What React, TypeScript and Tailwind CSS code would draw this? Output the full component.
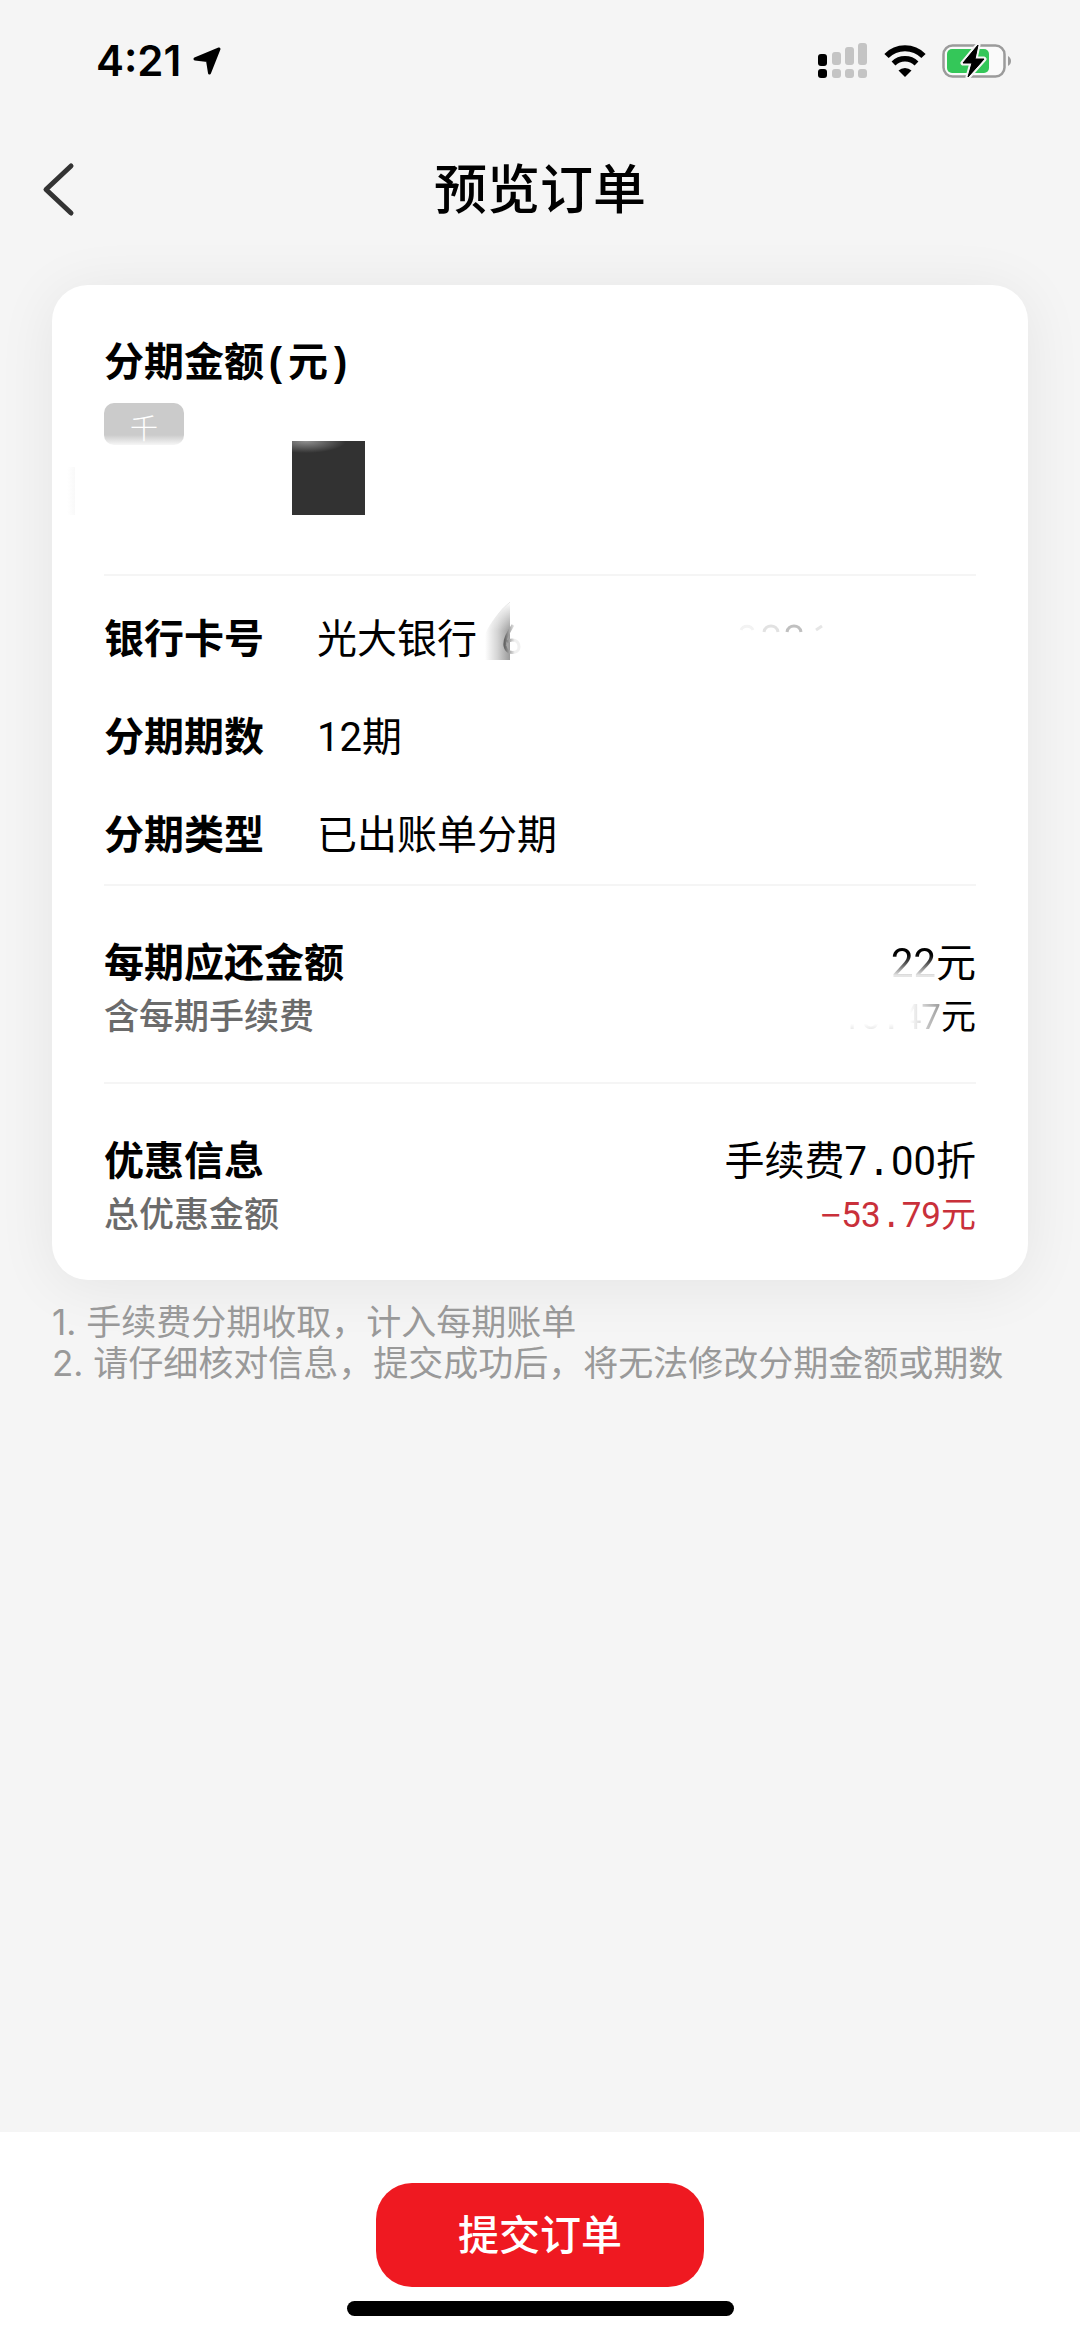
import { ReactNode } from "react";

interface InfoRow {
  label: string;
  value: ReactNode;
}

// 等宽的小数点、括号等符号
function Mono({ children }: { children: ReactNode }) {
  return (
    <span className="font-['Liberation_Mono',monospace] leading-none">
      {children}
    </span>
  );
}

const infoRows: InfoRow[] = [
  {
    label: "银行卡号",
    value: (
      <>
        光大银行
        <MaskedCardNumber />
      </>
    ),
  },
  { label: "分期期数", value: "12期" },
  { label: "分期类型", value: "已出账单分期" },
];

const notes = [
  "手续费分期收取，计入每期账单",
  "请仔细核对信息，提交成功后，将无法修改分期金额或期数",
];

// 涂抹过的卡号,只剩少量痕迹
function MaskedCardNumber() {
  return (
    <svg
      className="ml-2 h-19 w-[350px]"
      viewBox="0 0 350 76"
      fill="none"
      aria-hidden="true"
    >
      <defs>
        <linearGradient id="smear" x1="0" y1="0" x2="1" y2="0">
          <stop offset="0" stopColor="#fff" />
          <stop offset="0.5" stopColor="#d4d4d4" />
          <stop offset="1" stopColor="#9a9a9a" />
        </linearGradient>
        <linearGradient id="smearFade" x1="0" y1="0" x2="0" y2="1">
          <stop offset="0" stopColor="#fff" />
          <stop offset="0.5" stopColor="#fff" stopOpacity="0" />
        </linearGradient>
        <linearGradient id="digitFade" x1="0" y1="0" x2="1" y2="0">
          <stop offset="0" stopColor="#666" />
          <stop offset="0.7" stopColor="#f0f0f0" />
        </linearGradient>
      </defs>
      <path d="M0 58V32C6 20 14 9 25 0V58Z" fill="url(#smear)" />
      <path d="M0 58V32C6 20 14 9 25 0V58Z" fill="url(#smearFade)" />
      <path
        d="M28 23C22 33 19 38 20 44C22 53 34 52 34 45C34 38 27 36 22 40"
        stroke="url(#digitFade)"
        strokeWidth="3"
      />
      <g strokeWidth="3">
        <path d="M256 28C258 23 266 23 268 28" stroke="#f3f3f3" />
        <path d="M279 30C280 22 292 22 293 30" stroke="#e2e2e2" />
        <path d="M302 30C303 22 315 22 316 30" stroke="#c0c0c0" />
        <path d="M331 28L337 24" stroke="#e6e6e6" />
      </g>
    </svg>
  );
}

function StatusBar() {
  return (
    <div className="flex h-[122px] items-center justify-between pr-17 pl-24">
      <div className="flex items-center gap-3">
        <span className="font-[Inter,sans-serif] text-[42px] leading-none font-semibold">
          4:21
        </span>
        <svg className="h-7 w-7" viewBox="0 0 28 28" aria-hidden="true">
          <path
            d="M26 2L16.500 26L14.500 13.500L2 12Z"
            fill="#000"
            stroke="#000"
            strokeWidth="3"
            strokeLinejoin="round"
          />
        </svg>
      </div>
      <div className="flex items-center gap-4">
        <svg className="h-9 w-[50px]" viewBox="0 0 50 36" aria-hidden="true">
          <rect x="0" y="11" width="9" height="12" rx="3" fill="#000" />
          <rect x="14" y="9" width="9" height="13" rx="3" fill="#c4c4c4" />
          <rect x="27" y="4" width="9" height="18" rx="3" fill="#c4c4c4" />
          <rect x="40" y="0" width="9" height="22" rx="3" fill="#c4c4c4" />
          <rect x="0" y="26" width="9" height="9" rx="3" fill="#000" />
          <rect x="14" y="26" width="9" height="9" rx="3" fill="#c4c4c4" />
          <rect x="27" y="26" width="9" height="9" rx="3" fill="#c4c4c4" />
          <rect x="40" y="26" width="9" height="9" rx="3" fill="#c4c4c4" />
        </svg>
        <svg className="h-8 w-[42px]" viewBox="0 0 42 32" aria-hidden="true">
          <path d="M2.500 11A26 26 0 0 1 39.500 11" fill="none" stroke="#000" strokeWidth="6" />
          <path d="M9.500 18.500A16.500 16.500 0 0 1 32.500 18.500" fill="none" stroke="#000" strokeWidth="5.500" />
          <path d="M14.500 25.500A9.500 9.500 0 0 1 27.500 25.500L21 32Z" fill="#000" />
        </svg>
        <svg className="h-9 w-[70px]" viewBox="0 0 70 36" aria-hidden="true">
          <rect x="1.500" y="2.500" width="61" height="31" rx="9" fill="#fafafa" stroke="#9b9b9b" strokeWidth="2.500" />
          <rect x="5" y="6" width="42" height="24" rx="5" fill="#34c759" />
          <path d="M66 13C70 15 70 21 66 23Z" fill="#9b9b9b" />
          <path
            d="M36 2L21 20H30L26 34L42 16H33Z"
            fill="#000"
            stroke="#f5f5f5"
            strokeWidth="5"
            strokeLinejoin="round"
            paintOrder="stroke"
          />
          <path d="M36 2L21 20H30L26 34L42 16H33Z" fill="#000" stroke="#000" strokeLinejoin="round" />
        </svg>
      </div>
    </div>
  );
}

function Divider() {
  return <hr className="border-t-2 border-[#f5f5f5]" />;
}

export default function App() {
  return (
    <div className="flex min-h-screen flex-col bg-[#f5f5f5] font-[Roboto,'Noto_Sans_CJK_SC',sans-serif] text-black">
      <StatusBar />

      <header className="grid h-[134px] grid-cols-[1fr_auto_1fr] items-center px-10">
        <button type="button" aria-label="返回" className="justify-self-start">
          <svg className="h-14 w-9" viewBox="0 0 36 56" fill="none">
            <path
              d="M31 5L6 28.500L31 52"
              stroke="#333"
              strokeWidth="5"
              strokeLinecap="round"
              strokeLinejoin="round"
            />
          </svg>
        </button>
        <h1 className="pt-1 text-[53px] leading-none font-medium">预览订单</h1>
      </header>

      <main className="flex-1 px-[52px] pt-[29px]">
        <section className="rounded-[36px] bg-white px-[52px] pt-[52px] text-[40px] leading-[56px] shadow-[0_6px_60px_rgba(0,0,0,0.07)]">
          <h2 className="leading-[52px] font-bold">
            分期金额<Mono>(</Mono>元<Mono>)</Mono>
          </h2>
          <div className="relative mt-[14px] mb-[59px] h-28">
            <div className="h-[42px] w-20 overflow-hidden rounded-[10px] bg-[#cbcbcb] text-center text-[28px] leading-[54px] font-light text-white">
              千
            </div>
            <div className="absolute bottom-[68px] left-0 h-3 w-20 bg-linear-to-t from-white to-transparent" />
            <div className="absolute bottom-0 -left-[37px] h-12 w-2 bg-linear-to-r from-white to-[#f9f9f9]" />
            <div className="absolute bottom-0 left-[188px] h-[74px] w-[73px] bg-[#323232] bg-[radial-gradient(ellipse_40px_12px_at_14px_0,#909090,transparent)]" />
          </div>

          <Divider />
          <dl className="flex flex-col gap-[42px] pt-9 pb-5">
            {infoRows.map((row) => (
              <div key={row.label} className="flex h-14">
                <dt className="w-[213px] font-bold">{row.label}</dt>
                <dd className="flex items-center">{row.value}</dd>
              </div>
            ))}
          </dl>

          <Divider />
          <dl className="grid grid-cols-[1fr_auto] gap-y-[2px] pt-[50px] pb-10">
            <dt className="font-bold">每期应还金额</dt>
            <dd className="text-right">
              <span className="bg-linear-to-b from-black from-25% to-[#e5e5e5] to-75% bg-clip-text text-transparent">
                22
              </span>
              元
            </dd>
            <dt className="text-[35px] leading-[48px] font-medium text-[#6b6b6b]">含每期手续费</dt>
            <dd className="text-right text-[35px] leading-[48px]">
              <span className="bg-linear-to-b from-white from-65% to-[#d8d8d8] to-90% bg-clip-text text-transparent">
                10<Mono>.</Mono>
              </span>
              <span className="bg-linear-to-r from-white from-20% to-[#999] bg-clip-text text-transparent">
                47
              </span>
              元
            </dd>
          </dl>

          <Divider />
          <dl className="grid grid-cols-[1fr_auto] gap-y-[2px] pt-[50px] pb-10">
            <dt className="font-bold">优惠信息</dt>
            <dd className="text-right">
              手续费7<Mono>.</Mono>00折
            </dd>
            <dt className="text-[35px] leading-[48px] font-medium text-[#6b6b6b]">总优惠金额</dt>
            <dd className="text-right text-[35px] leading-[48px] text-[#c9303a]">
              <Mono>−</Mono>53<Mono>.</Mono>79元
            </dd>
          </dl>
        </section>

        <ol className="mt-[22px] font-[Inter,'Noto_Sans_CJK_SC',sans-serif] text-[35px] leading-[41px] text-[#999]">
          {notes.map((note, index) => (
            <li key={note}>
              {index + 1}. {note}
            </li>
          ))}
        </ol>
      </main>

      <footer className="flex flex-col items-center bg-white pt-[51px] pb-[23px]">
        <button
          type="button"
          className="h-[104px] rounded-[36px] bg-[#ef1921] px-[82px] pt-1 text-[41px] font-medium text-white"
        >
          提交订单
        </button>
        <div className="mt-[14px] h-[15px] w-[387px] rounded-full bg-black" />
      </footer>
    </div>
  );
}
